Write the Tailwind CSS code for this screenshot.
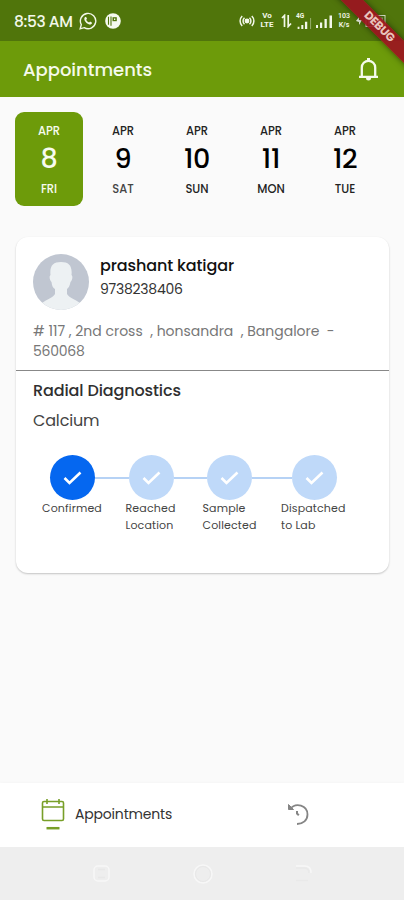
<!DOCTYPE html>
<html lang="en">
<head>
<meta charset="utf-8">
<title>Appointments</title>
<script src="https://cdn.jsdelivr.net/npm/@tailwindcss/browser@4"></script>
</head>
<body class="w-[404px] h-[900px] overflow-hidden bg-[#fafafa] font-[Poppins,Inter,sans-serif] text-[#151515]">
<div class="relative flex h-[900px] w-[404px] flex-col overflow-hidden">

  <!-- Status bar -->
  <div class="flex h-[41px] shrink-0 items-center bg-[#50750b] pl-[14px] text-[#f3f8ea]">
    <span class="w-[65px] pt-[2px] whitespace-nowrap text-[15.5px] font-medium tracking-[-0.400px]">8:53 AM</span>
    <svg class="h-[18px] w-[18px]" viewBox="0 0 18 18" fill="none" stroke="currentColor" stroke-width="1.4"><path d="M1.2 16.8l1.1-4.1A7.7 7.7 0 1 1 5.2 15.700z"/><path d="M5.800 5.200l1.200-.4 1 2-.8 1c.7 1.400 1.500 2.200 2.900 2.800l1-1 2 1.100c-.3 1.500-1.400 2-2.800 1.700C7.600 11.700 5.200 9 5.300 6.500z" fill="currentColor" stroke="none"/></svg>
    <svg class="ml-[8px] h-4 w-4" viewBox="0 0 16 16"><circle cx="8" cy="8" r="7.800" fill="#f6faf0"/><path d="M3.500 3.800v8M6 3.500v9.300" fill="none" stroke="#50750b" stroke-width="1.100"/><path d="M7.500 4.200h4.300v4H7.500z" fill="#50750b"/><path d="M9 5.600h1.300v1.300H9z" fill="#f6faf0"/></svg>
    <svg class="ml-[118px] h-[14px] w-4" viewBox="0 0 16 14" fill="none" stroke="currentColor" stroke-width="1.500"><circle cx="8" cy="7" r="1.700" fill="currentColor"/><path d="M5.500 3.800a4.300 4.300 0 0 0 0 6.400M10.500 3.800a4.300 4.300 0 0 1 0 6.400M3.200 2a7 7 0 0 0 0 10M12.800 2a7 7 0 0 1 0 10"/></svg>
    <div class="ml-[4px] flex w-[16px] flex-col items-center gap-[1px] font-[Roboto,sans-serif] text-[8px] leading-[8px] font-bold"><span class="h-[8px]">Vo</span><span class="h-[8px]">LTE</span></div>
    <svg class="ml-[6px] h-[14px] w-[11px]" viewBox="0 0 11 14" fill="none" stroke="currentColor" stroke-width="1.700"><path d="M1 4l2.500-2.500V13M7.200 1v11.500L10 9.500"/></svg>
    <div class="ml-[4px] flex h-[16px] w-[17px] flex-col">
      <span class="font-[Roboto,sans-serif] text-[6.500px] leading-[6px] font-bold">4G</span>
      <svg class="-mt-[1px] h-[12px] w-[17px]" viewBox="0 0 17 12" fill="currentColor"><path d="M1 9.500h2V12H1zM5 7.500h2.200V12H5zM9 4h2.500v8H9z"/><path d="M14.500 0h1.200v12h-1.200z" opacity=".4"/></svg>
    </div>
    <svg class="ml-[3px] h-[14px] w-[17px]" viewBox="0 0 17 14" fill="currentColor"><path d="M0 11h2v3H0zM4 8.500h2.200V14H4zM8.500 5h2.300v9H8.500zM13.500 1.500H16V14h-2.500z"/></svg>
    <div class="ml-[4px] flex w-[14px] flex-col items-center font-[Roboto,sans-serif] text-[7px] leading-[9px] font-semibold"><span>103</span><span>K/s</span></div>
    <svg class="ml-[5px] h-[14px] w-[32px]" viewBox="0 0 32 14" fill="none" stroke="currentColor"><path d="M0 7l3-4v3h3l-3 5V8z" fill="currentColor" stroke="none"/><rect x="10" y="1.500" width="19" height="11" opacity=".85"/><path d="M12 7h15" stroke-width="7" opacity=".5"/></svg>
  </div>

  <!-- App bar -->
  <div class="flex h-[56px] shrink-0 items-center justify-between bg-[#6d9b0a] pr-[25px] pl-[23px] text-[#f5faeb]">
    <h1 class="text-[18px] font-medium tracking-[-0.02px]">Appointments</h1>
    <svg class="h-6 w-[21px]" viewBox="0 0 21 24" fill="none" stroke="currentColor" stroke-width="2.300"><path d="M1 19.800h19M3.800 19V10.500a6.700 6.700 0 0 1 13.400 0V19"/><path d="M10.500 1v3" stroke-width="3"/><path d="M8 21h5a2.500 2.500 0 0 1-5 0z" fill="currentColor" stroke="none"/></svg>
  </div>

  <!-- Date picker -->
  <div class="mt-[15px] ml-[15px] flex h-[94px] shrink-0 gap-[6px] text-center text-[11.500px] leading-[16px] font-medium text-[#222]">
    <div class="flex w-[68px] flex-col items-center rounded-[9px] bg-[#6d9b0a] pt-[11px] text-[#f7fbef]"><span>APR</span><b class="mt-[6px] mb-[8px] text-[27px] leading-[28px] font-medium">8</b><span>FRI</span></div>
    <div class="flex w-[68px] flex-col items-center pt-[11px]"><span>APR</span><b class="mt-[6px] mb-[8px] text-[27px] leading-[28px] font-medium text-black">9</b><span class="text-[#444]">SAT</span></div>
    <div class="flex w-[68px] flex-col items-center pt-[11px]"><span>APR</span><b class="mt-[6px] mb-[8px] text-[27px] leading-[28px] font-medium tracking-[-0.500px] text-black">10</b><span>SUN</span></div>
    <div class="flex w-[68px] flex-col items-center pt-[11px]"><span>APR</span><b class="mt-[6px] mb-[8px] text-[27px] leading-[28px] font-medium tracking-[-0.300px] text-black">11</b><span>MON</span></div>
    <div class="flex w-[68px] flex-col items-center pt-[11px]"><span>APR</span><b class="mt-[6px] mb-[8px] text-[27px] leading-[28px] font-medium tracking-[-0.500px] text-black">12</b><span>TUE</span></div>
  </div>

  <!-- Appointment card -->
  <div class="mt-[31px] ml-[16px] h-[336px] w-[373px] shrink-0 rounded-[12px] bg-white shadow-[0_1px_2px_rgba(0,0,0,0.22)]">
    <div class="h-[134px] border-b border-[#888] pt-[17px] pl-[17px]">
      <div class="flex">
        <svg class="h-14 w-14" viewBox="0 0 56 56"><defs><clipPath id="avatar"><circle cx="28" cy="28" r="28"/></clipPath></defs><g clip-path="url(#avatar)"><path fill="#c0c6d1" d="M0 0h56v56H0z"/><path fill="#edf1f3" d="M28 8c8 0 11.500 4 10.500 13 1.500 1 1 5-1 7-.8 4-2 6-3.500 7v5c2 4 8 5 13 9v8H9v-8c5-4 11-5 13-9v-5c-2-1-3-3-3.500-7-2-2-2.500-6-1-7C16.500 12 20 8 28 8z"/></g></svg>
        <div class="ml-[11px] pt-[1px]">
          <h2 class="text-[16px] leading-[22px] font-medium tracking-[-0.120px] text-[#111]">prashant katigar</h2>
          <p class="mt-[1px] text-[14px] leading-[22px] tracking-[-0.250px] text-[#333]">9738238406</p>
        </div>
      </div>
      <p class="mt-[11px] text-[14px] leading-[20px] whitespace-pre text-[#777]"><span class="tracking-[-0.010px]"># 117 , 2nd cross  , honsandra  , Bangalore  -</span><br><span class="tracking-[-0.250px]">560068</span></p>
    </div>
    <div class="pt-[9px]">
      <h3 class="pl-[17px] text-[16px] leading-[22px] font-medium tracking-[-0.120px] text-[#303030]">Radial Diagnostics</h3>
      <p class="mt-[8px] pl-[17px] text-[16px] leading-[22px] tracking-[-0.150px] text-[#444]">Calcium</p>
      <div class="mt-[23px] flex items-center pl-[34px]">
        <span class="flex size-[45px] items-center justify-center rounded-full bg-[#0567f0]"><svg class="h-[14px] w-[19px]" viewBox="0 0 19 14" fill="none" stroke="#fff" stroke-width="2.600"><path d="M1.500 7l5 5L17.500 1.500"/></svg></span>
        <span class="h-[2px] w-[33.500px] bg-[#b6d2f5]"></span>
        <span class="flex size-[45px] items-center justify-center rounded-full bg-[#bfd9f9]"><svg class="h-[14px] w-[19px]" viewBox="0 0 19 14" fill="none" stroke="#fff" stroke-width="2.600"><path d="M1.500 7l5 5L17.500 1.500"/></svg></span>
        <span class="h-[2px] w-[33.500px] bg-[#b6d2f5]"></span>
        <span class="flex size-[45px] items-center justify-center rounded-full bg-[#bfd9f9]"><svg class="h-[14px] w-[19px]" viewBox="0 0 19 14" fill="none" stroke="#fff" stroke-width="2.600"><path d="M1.500 7l5 5L17.500 1.500"/></svg></span>
        <span class="h-[2px] w-[39.500px] bg-[#b6d2f5]"></span>
        <span class="flex size-[45px] items-center justify-center rounded-full bg-[#bfd9f9]"><svg class="h-[14px] w-[19px]" viewBox="0 0 19 14" fill="none" stroke="#fff" stroke-width="2.600"><path d="M1.500 7l5 5L17.500 1.500"/></svg></span>
      </div>
      <div class="grid grid-cols-[83.500px_77px_78.500px_80px] pl-[26px] text-[11px] leading-[17px] tracking-[0.150px] text-[#444]">
        <span>Confirmed</span><span>Reached<br>Location</span><span>Sample<br>Collected</span><span>Dispatched<br>to Lab</span>
      </div>
    </div>
  </div>

  <!-- Bottom navigation -->
  <div class="mt-auto flex h-[64px] shrink-0 bg-white pt-[15px] shadow-[0_-1px_3px_rgba(0,0,0,0.02)]">
    <svg class="ml-[41px] h-[33px] w-[24px]" viewBox="0 0 24 33" fill="none" stroke="#789f28" stroke-width="1.600"><rect x="1.500" y="3.500" width="21" height="19" rx="1.500"/><path d="M2 9h20M6 1v5M18 1v5"/><path d="M5.500 30.200h13" stroke-width="2.500"/></svg>
    <span class="ml-[10px] w-[100px] text-[14px] leading-[33px] tracking-[-0.180px] text-[#333]">Appointments</span>
    <svg class="mt-[5px] ml-[112px] h-[23px] w-[23px]" viewBox="0 0 23 23" fill="none" stroke="#858585" stroke-width="1.800"><path d="M2.500 6.500C9-1.500 20.500 2.500 20.500 11.500c0 5.500-4.500 9.500-10.500 9.500"/><path d="M1.500 1.500v5H6.500z" fill="#858585" stroke-width="1"/><path d="M10 8v2.500l1.800 1.800" stroke-width="2"/></svg>
  </div>

  <!-- System navigation -->
  <div class="flex h-[53px] shrink-0 items-center bg-[#eeeeee] pl-[93px]">
    <svg class="h-[17px] w-[17px]" viewBox="0 0 17 17" fill="none" stroke="#f7f7f7" stroke-width="1.500"><rect x="1" y="1" width="15" height="15" rx="4"/><path d="M5 4.500h7M5 12.500h7" stroke="#e8e8e8"/></svg>
    <svg class="ml-[83px] h-[20px] w-[20px]" viewBox="0 0 20 20" fill="none" stroke="#f7f7f7" stroke-width="1.500"><circle cx="10" cy="10" r="9"/><circle cx="10" cy="10" r="7.500" stroke="#e8e8e8" stroke-width="1"/></svg>
    <svg class="ml-[82px] h-[17px] w-[17px]" viewBox="0 0 17 17" fill="none" stroke="#f7f7f7" stroke-width="1.500"><path d="M1 1h9c4 0 6 3 6 7"/><path d="M1 3h8c3 0 5 2 5 5M1 15.500h12" stroke="#e9e9e9"/></svg>
  </div>

  <!-- Debug ribbon -->
  <div class="absolute top-[19px] left-[319px] flex h-[16px] w-[120px] rotate-45 items-center justify-center bg-[#9c1220]/90 text-[11.500px] leading-none font-bold tracking-[-0.300px] text-[#e9c4bd] shadow-[0_0_6px_rgba(0,0,0,0.5)]"><span>DEBUG</span></div>
</div>
</body>
</html>
